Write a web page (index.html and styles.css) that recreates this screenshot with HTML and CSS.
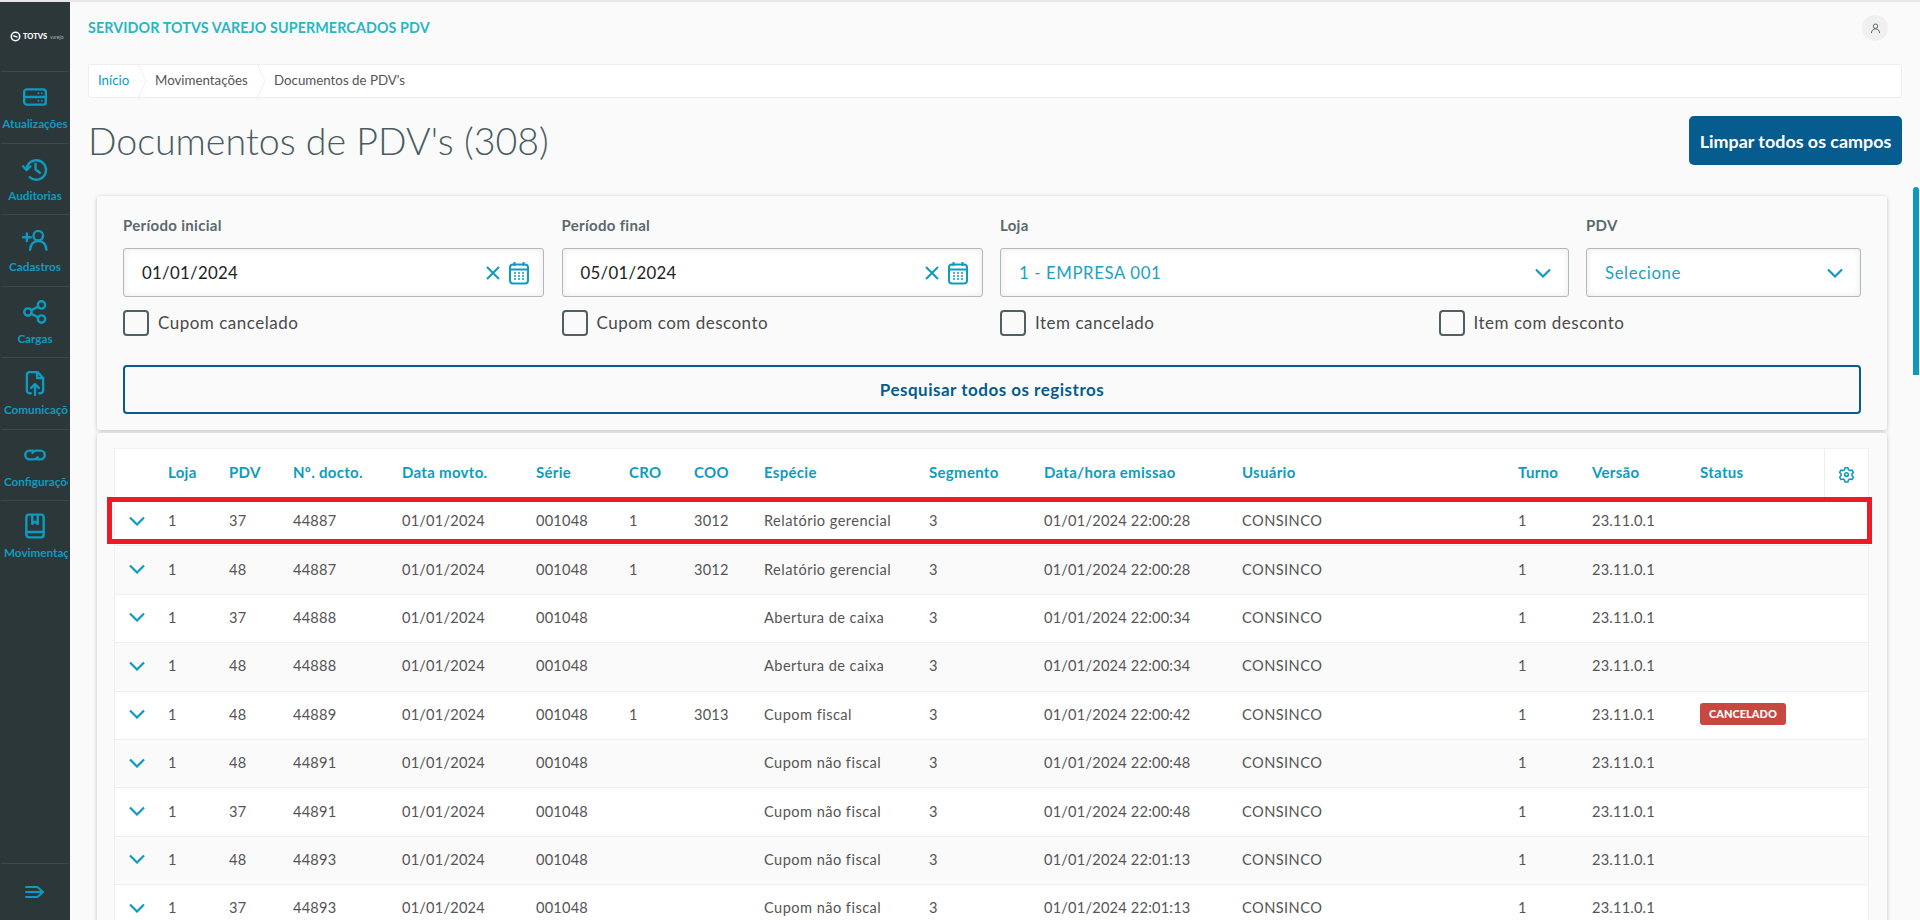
FILE: index.html
```html
<!DOCTYPE html>
<html lang="pt-BR">
<head>
<meta charset="utf-8">
<title>Documentos de PDV's</title>
<link rel="stylesheet" href="styles.css">
</head>
<body>
<svg class="defs" width="0" height="0" aria-hidden="true">
  <symbol id="chev" viewBox="0 0 16 10"><path d="M1 1.5 8 8.5 15 1.5" fill="none" stroke="currentColor" stroke-width="2.2"/></symbol>
  <symbol id="cal" viewBox="0 0 20 24"><rect x="1" y="3.5" width="18" height="19" rx="3" fill="none" stroke="currentColor" stroke-width="2"/><path d="M1 8.5h18" stroke="currentColor" stroke-width="2"/><path d="M5.5 1v4M14.5 1v4" stroke="currentColor" stroke-width="2"/><path d="M5 12h2M9 12h2M13 12h2M5 15h2M9 15h2M13 15h2M5 18h2M9 18h2M13 18h2" stroke="currentColor" stroke-width="1.6"/></symbol>
  <symbol id="x" viewBox="0 0 14 14"><path d="M1 1 13 13M13 1 1 13" stroke="currentColor" stroke-width="2.1"/></symbol>
</svg>
<div class="app">
  <nav class="sidebar">
    <div class="logo">
      <svg class="logo-mark" viewBox="0 0 12 12"><circle cx="6" cy="6" r="4.6" fill="none" stroke="#fff" stroke-width="1.7"/><path d="M3.6 5.2 8.2 6.6" stroke="#fff" stroke-width="1.5"/></svg>
      <span class="logo-name">TOTVS</span><span class="logo-sub">varejo</span>
    </div>
    <a class="nav-item">
      <svg class="nav-icon" viewBox="0 0 24 24"><rect x="2" y="5" width="20" height="14" rx="2.4"/><path d="M2 12h20"/><path d="M14.500 8.500h1.500M17.500 8.500h1.500M14.500 15.500h1.500M17.500 15.500h1.500" class="thin"/></svg>
      <span>Atualizações</span>
    </a>
    <a class="nav-item">
      <svg class="nav-icon" viewBox="0 0 24 24"><path d="M4.200 12a9 9 0 1 1 2.900 7.600"/><path d="M1 9.500 4.200 13l3.400-3.400"/><path d="M12.500 7v5.500l4 3"/></svg>
      <span>Auditorias</span>
    </a>
    <a class="nav-item">
      <svg class="nav-icon" viewBox="0 0 24 24"><circle cx="15" cy="8" r="4.400"/><path d="M7.500 21c.3-5 3-8 7.500-8s7.200 3 7.500 8"/><path d="M1 9.500h7M4.500 6v7"/></svg>
      <span>Cadastros</span>
    </a>
    <a class="nav-item">
      <svg class="nav-icon" viewBox="0 0 24 24"><circle cx="5.500" cy="12" r="3.400"/><circle cx="18" cy="5.500" r="3.400"/><circle cx="18" cy="18.500" r="3.400"/><path d="M8.500 10.400 15 7M8.500 13.600 15 17"/></svg>
      <span>Cargas</span>
    </a>
    <a class="nav-item">
      <svg class="nav-icon" viewBox="0 0 24 24"><path d="M8 21.500H7A2.500 2.500 0 0 1 4.500 19V4.500A2.500 2.500 0 0 1 7 2h7.500l5 5.500V19a2.500 2.500 0 0 1-2.500 2.500h-1"/><path d="M14 2.500v5h5"/><path d="M12 23v-10M8.500 16.500 12 13l3.500 3.500"/></svg>
      <span>Comunicações</span>
    </a>
    <a class="nav-item">
      <svg class="nav-icon" viewBox="0 0 24 24"><path d="M10 8H7a4 4 0 0 0 0 8h4a4 4 0 0 0 3.500-2"/><path d="M14 16h3a4 4 0 0 0 0-8h-4a4 4 0 0 0-3.500 2"/></svg>
      <span>Configurações</span>
    </a>
    <a class="nav-item">
      <svg class="nav-icon" viewBox="0 0 24 24"><rect x="4" y="1.500" width="16" height="21" rx="2.400"/><path d="M4 17.500h16"/><path d="M9.500 2v8l2.500-2 2.500 2V2"/></svg>
      <span>Movimentações</span>
    </a>
    <div class="side-foot">
      <svg class="collapse" viewBox="0 0 20 14"><path d="M1 2h11M1 7h15M1 12h11M13 2.500 18 7l-5 4.500"/></svg>
    </div>
  </nav>

  <main class="main">
    <header class="topbar">
      <h2 class="app-name">SERVIDOR TOTVS VAREJO SUPERMERCADOS PDV</h2>
      <span class="avatar"><svg viewBox="0 0 12 12"><circle cx="6" cy="3.500" r="2.400"/><path d="M1.500 11c.2-3 2-4.600 4.500-4.600s4.300 1.600 4.500 4.600"/></svg></span>
    </header>

    <div class="crumbs">
      <a class="crumb crumb-link">Início</a>
      <svg class="crumb-sep" viewBox="0 0 10 34"><path d="M1 0 9 17 1 34"/></svg>
      <a class="crumb crumb-mid">Movimentações</a>
      <svg class="crumb-sep" viewBox="0 0 10 34"><path d="M1 0 9 17 1 34"/></svg>
      <span class="crumb">Documentos de PDV's</span>
    </div>

    <div class="title-row">
      <h1 class="title">Documentos de PDV's (308)</h1>
      <button class="btn-primary">Limpar todos os campos</button>
    </div>

    <section class="panel filters">
      <div class="field-row">
        <div class="field">
          <label class="field-label">Período inicial</label>
          <div class="input"><span class="val">01/01/2024</span>
            <svg class="i-x"><use href="#x"/></svg><svg class="i-cal"><use href="#cal"/></svg></div>
        </div>
        <div class="field">
          <label class="field-label">Período final</label>
          <div class="input"><span class="val">05/01/2024</span>
            <svg class="i-x"><use href="#x"/></svg><svg class="i-cal"><use href="#cal"/></svg></div>
        </div>
        <div class="field">
          <label class="field-label">Loja</label>
          <div class="input input-select"><span class="val val-sel">1 - EMPRESA 001</span><svg class="i-chev"><use href="#chev"/></svg></div>
        </div>
        <div class="field">
          <label class="field-label">PDV</label>
          <div class="input input-select"><span class="val val-sel">Selecione</span><svg class="i-chev"><use href="#chev"/></svg></div>
        </div>
      </div>
      <div class="check-row">
        <label class="check"><span class="box"></span><span class="check-text">Cupom cancelado</span></label>
        <label class="check"><span class="box"></span><span class="check-text">Cupom com desconto</span></label>
        <label class="check"><span class="box"></span><span class="check-text">Item cancelado</span></label>
        <label class="check"><span class="box"></span><span class="check-text">Item com desconto</span></label>
      </div>
      <button class="btn-outline">Pesquisar todos os registros</button>
    </section>

    <section class="panel results">
      <table class="grid">
        <colgroup>
          <col class="c-exp"><col class="c-loja"><col class="c-pdv"><col class="c-doc"><col class="c-data"><col class="c-serie"><col class="c-cro"><col class="c-coo"><col class="c-esp"><col class="c-seg"><col class="c-hora"><col class="c-user"><col class="c-turno"><col class="c-ver"><col class="c-status"><col class="c-gear">
        </colgroup>
        <thead>
          <tr><th></th><th>Loja</th><th>PDV</th><th>Nº. docto.</th><th>Data movto.</th><th>Série</th><th>CRO</th><th>COO</th><th>Espécie</th><th>Segmento</th><th>Data/hora emissao</th><th>Usuário</th><th>Turno</th><th>Versão</th><th>Status</th>
            <th class="gear-cell"><svg class="gear" viewBox="0 0 24 24"><path d="M10 2.500h4l.7 2.800 2.300 1.300 2.800-.8 2 3.400-2.100 2 0 2.600 2.100 2-2 3.400-2.800-.8-2.300 1.300-.7 2.800h-4l-.7-2.800-2.300-1.300-2.800.8-2-3.400 2.100-2 0-2.600-2.100-2 2-3.400 2.800.8 2.300-1.300z"/><circle cx="12" cy="12" r="2.600"/></svg></th>
          </tr>
        </thead>
        <tbody>
          <tr class="marked"><td class="exp"><svg class="i-chev"><use href="#chev"/></svg><span class="mark"></span></td><td>1</td><td>37</td><td>44887</td><td>01/01/2024</td><td>001048</td><td>1</td><td>3012</td><td>Relatório gerencial</td><td>3</td><td>01/01/2024 22:00:28</td><td>CONSINCO</td><td>1</td><td>23.11.0.1</td><td></td><td></td></tr>
          <tr><td class="exp"><svg class="i-chev"><use href="#chev"/></svg></td><td>1</td><td>48</td><td>44887</td><td>01/01/2024</td><td>001048</td><td>1</td><td>3012</td><td>Relatório gerencial</td><td>3</td><td>01/01/2024 22:00:28</td><td>CONSINCO</td><td>1</td><td>23.11.0.1</td><td></td><td></td></tr>
          <tr><td class="exp"><svg class="i-chev"><use href="#chev"/></svg></td><td>1</td><td>37</td><td>44888</td><td>01/01/2024</td><td>001048</td><td></td><td></td><td>Abertura de caixa</td><td>3</td><td>01/01/2024 22:00:34</td><td>CONSINCO</td><td>1</td><td>23.11.0.1</td><td></td><td></td></tr>
          <tr><td class="exp"><svg class="i-chev"><use href="#chev"/></svg></td><td>1</td><td>48</td><td>44888</td><td>01/01/2024</td><td>001048</td><td></td><td></td><td>Abertura de caixa</td><td>3</td><td>01/01/2024 22:00:34</td><td>CONSINCO</td><td>1</td><td>23.11.0.1</td><td></td><td></td></tr>
          <tr><td class="exp"><svg class="i-chev"><use href="#chev"/></svg></td><td>1</td><td>48</td><td>44889</td><td>01/01/2024</td><td>001048</td><td>1</td><td>3013</td><td>Cupom fiscal</td><td>3</td><td>01/01/2024 22:00:42</td><td>CONSINCO</td><td>1</td><td>23.11.0.1</td><td><span class="tag">CANCELADO</span></td><td></td></tr>
          <tr><td class="exp"><svg class="i-chev"><use href="#chev"/></svg></td><td>1</td><td>48</td><td>44891</td><td>01/01/2024</td><td>001048</td><td></td><td></td><td>Cupom não fiscal</td><td>3</td><td>01/01/2024 22:00:48</td><td>CONSINCO</td><td>1</td><td>23.11.0.1</td><td></td><td></td></tr>
          <tr><td class="exp"><svg class="i-chev"><use href="#chev"/></svg></td><td>1</td><td>37</td><td>44891</td><td>01/01/2024</td><td>001048</td><td></td><td></td><td>Cupom não fiscal</td><td>3</td><td>01/01/2024 22:00:48</td><td>CONSINCO</td><td>1</td><td>23.11.0.1</td><td></td><td></td></tr>
          <tr><td class="exp"><svg class="i-chev"><use href="#chev"/></svg></td><td>1</td><td>48</td><td>44893</td><td>01/01/2024</td><td>001048</td><td></td><td></td><td>Cupom não fiscal</td><td>3</td><td>01/01/2024 22:01:13</td><td>CONSINCO</td><td>1</td><td>23.11.0.1</td><td></td><td></td></tr>
          <tr><td class="exp"><svg class="i-chev"><use href="#chev"/></svg></td><td>1</td><td>37</td><td>44893</td><td>01/01/2024</td><td>001048</td><td></td><td></td><td>Cupom não fiscal</td><td>3</td><td>01/01/2024 22:01:13</td><td>CONSINCO</td><td>1</td><td>23.11.0.1</td><td></td><td></td></tr>
        </tbody>
      </table>
    </section>
  </main>
  <div class="scroll-thumb"></div>
</div>
</body>
</html>
```
FILE: styles.css
```css
* { box-sizing: border-box; }
html, body { margin: 0; height: 100%; overflow: hidden; }
body {
  font-family: "Lato", "Noto Sans", sans-serif;
  background: #fafafa;
  color: #4a5c60;
  border-top: 2px solid #e6e6e6;
}
.defs { position: absolute; }
.app { display: flex; height: 918px; position: relative; overflow: hidden; }

/* sidebar */
.sidebar {
  width: 70px;
  flex: none;
  background: #2c373a;
  display: flex;
  flex-direction: column;
}
.logo {
  height: 70px;
  display: flex;
  align-items: center;
  gap: 1px;
  padding: 0 0 0 9px;
  border-bottom: 1px solid #3c474a;
  margin: 0 1px;
  color: #fff;
}
.logo-mark { width: 11px; height: 11px; flex: none; }
.logo-name { font-size: 7.500px; font-weight: 900; margin-left: 1px; }
.logo-sub { font-size: 5px; color: #aab2b4; margin-left: 2px; }
.nav-item {
  height: 71.500px;
  margin: 0 1px;
  border-bottom: 1px solid #3c474a;
  display: flex;
  flex-direction: column;
  align-items: center;
  padding-top: 12px;
  color: #0f9bc0;
  font-size: 11.700px;
  font-weight: 700;
  white-space: nowrap;
}
.nav-item:nth-of-type(7) { border-bottom: 0; }
.nav-item span { display: block; width: 66px; text-align: center; margin-top: 6px; overflow: hidden; }
.nav-item:nth-of-type(n+5) span { padding-left: 2px; text-align: left; }
.nav-item:nth-of-type(6) span { padding-left: 2px; }
.nav-icon {
  width: 26px; height: 26px; flex: none;
  fill: none; stroke: #0f9bc0; stroke-width: 2.200; stroke-linecap: round; stroke-linejoin: round;
}
.nav-icon .thin { stroke-width: 1.300; stroke-linecap: butt; }
.side-foot {
  margin: auto 1px 0;
  height: 57px;
  border-top: 1px solid #3c474a;
  display: flex;
  align-items: center;
  justify-content: center;
}
.collapse { width: 20px; height: 14px; fill: none; stroke: #0f9bc0; stroke-width: 2; stroke-linecap: round; stroke-linejoin: round; }

/* main */
.main { flex: 1; min-width: 0; padding: 0 18px; }
.topbar { height: 62px; display: flex; align-items: center; justify-content: space-between; padding: 0 14px 12px 0; }
.app-name { margin: 0; font-size: 14.300px; font-weight: 700; color: #29b6c5; letter-spacing: .1px; }
.avatar {
  width: 26px; height: 26px; margin-top: 2px; border-radius: 50%; background: #f0f0f0;
  display: flex; align-items: center; justify-content: center;
}
.avatar svg { width: 11px; height: 11px; fill: none; stroke: #4a5c60; stroke-width: 1; }

.crumbs {
  height: 34px;
  background: #fff;
  border: 1px solid #eee;
  border-radius: 3px;
  display: flex;
  align-items: center;
  font-size: 13.300px;
  padding: 0 0 2px 9px;
}
.crumb { color: #555; }
.crumb-link { color: #0f9bc0; width: 39px; }
.crumb-mid { width: 101px; }
.crumb-sep { width: 10px; height: 34px; flex: none; fill: none; stroke: #eee; margin: 0 8px 0 0; position: relative; top: 1px; }

.title-row { display: flex; justify-content: space-between; align-items: center; height: 49px; margin-top: 18px; }
.title { margin: 0; font-size: 37.600px; font-weight: 300; color: #4a5c60; }
.btn-primary {
  width: 213px; height: 49px; padding: 0; border: 0; border-radius: 5px;
  background: #065c8f; color: #fff;
  font: 700 17.900px "Lato", sans-serif;
}

.panel {
  margin: 0 15px 0 9px;
  background: #fafafa;
  border-radius: 3px;
  box-shadow: 0 1px 4px rgba(0, 0, 0, .22);
}
.filters { margin-top: 31px; height: 234px; padding: 19px 26px 0; }
.field-row { display: grid; grid-template-columns: 421px 421px 1fr 275px; column-gap: 17.500px; }
.field-label { display: block; height: 20px; line-height: 20px; margin-bottom: 13px; font-size: 15px; letter-spacing: .3px; font-weight: 700; color: #5a696d; }
.input {
  height: 49px;
  background: #fff;
  border: 1px solid #b0babd;
  border-radius: 3px;
  box-shadow: inset 0 0 7px rgba(0, 0, 0, .09);
  display: flex;
  align-items: center;
  padding: 0 14px 0 18px;
  gap: 9px;
}
.input-select { padding-right: 9px; }
.val { flex: 1; font-size: 16.800px; letter-spacing: .3px; color: #222; }
.val-sel { color: #1ca0c4; letter-spacing: .6px; }
.i-x { width: 14px; height: 14px; color: #0f9bc0; }
.i-cal { width: 20px; height: 24px; color: #0f9bc0; }
.i-chev { width: 16px; height: 10px; color: #0f9bc0; margin-right: 8px; }
.check-row { display: grid; grid-template-columns: 421px 421px 421px 1fr; column-gap: 17.500px; margin-top: 13px; }
.check { display: flex; align-items: center; gap: 9px; font-size: 17px; letter-spacing: .5px; color: #4a4a4a; height: 26px; }
.check-text { margin-top: -2px; }
.box { width: 26px; height: 26px; border: 2px solid #4f5f63; border-radius: 4px; background: #fafafa; flex: none; }
.btn-outline {
  display: block; width: 100%; height: 49px; margin-top: 29px;
  background: transparent; border: 2px solid #065c8f; border-radius: 4px;
  color: #065c8f; font: 700 17px "Lato", sans-serif; letter-spacing: .5px;
}

.results { margin-top: 3px; height: 500px; padding: 16px 19px 0 18px; }
.grid {
  width: 100%;
  table-layout: fixed;
  border-collapse: separate;
  border-spacing: 0;
  background: #fff;
  font-size: 14.600px;
  letter-spacing: .2px;
  box-shadow: 0 0 0 1px #f1f1f1;
}
.c-exp { width: 45px; } .c-loja { width: 61px; } .c-pdv { width: 64px; } .c-doc { width: 109px; }
.c-data { width: 134px; } .c-serie { width: 93px; } .c-cro { width: 65px; } .c-coo { width: 70px; }
.c-esp { width: 165px; } .c-seg { width: 115px; } .c-hora { width: 198px; } .c-user { width: 276px; }
.c-turno { width: 74px; } .c-ver { width: 108px; } .c-status { width: 132px; } .c-gear { width: 44px; }
.grid th {
  height: 48px; padding: 0 8px 2px; text-align: left;
  color: #0f9bc0; font-weight: 700; font-size: 15px; letter-spacing: .3px;
}
.grid .gear-cell { border-left: 1px solid #eee; text-align: center; padding: 0; }
.gear { width: 17px; height: 17px; fill: none; stroke: #0f9bc0; stroke-width: 2.200; stroke-linejoin: round; vertical-align: middle; }
.grid td {
  height: 48.400px; padding: 0 8px 2px; color: #555; white-space: nowrap;
  border-top: 1px solid #eee;
}
.grid td:nth-child(9), .grid td:nth-child(12) { letter-spacing: .45px; }
.grid tbody tr:nth-child(even) td { background: #fafafa; }
.grid td.exp { padding: 0 0 0 14px; }
.exp .i-chev { display: block; margin: -2px 0 0; }
.marked { position: relative; }
.mark {
  position: absolute;
  left: -8px; right: -4px; top: 0; height: 47px;
  border: 5px solid #ed1c24;
  pointer-events: none;
}
.tag {
  display: inline-block; height: 22px; line-height: 22px; padding: 0 9px;
  background: #c64840; color: #fff; border-radius: 3px;
  font-size: 11px; font-weight: 900; letter-spacing: 0;
}
.scroll-thumb {
  position: absolute; right: 1px; top: 185px; width: 6px; height: 188px;
  background: #0c9abe; border-radius: 3px 3px 0 0;
}
```
